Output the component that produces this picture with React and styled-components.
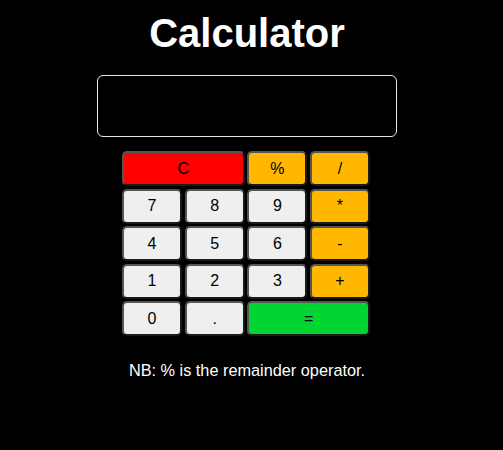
import React from "react";
import styled, { createGlobalStyle } from "styled-components";

const Global = createGlobalStyle`
  html, body { margin: 0; padding: 0; background: #000; }
  body { font-family: "Liberation Sans", Arial, sans-serif; }
`;

const Page = styled.div`
  width: 494px;
  padding-top: 10px;
  display: flex;
  flex-direction: column;
  align-items: center;
  color: #fff;
`;

const Title = styled.h1`
  margin: 0;
  font-size: 40px;
  line-height: 46px;
  font-weight: bold;
  color: #fff;
`;

const Display = styled.div`
  margin-top: 19px;
  box-sizing: border-box;
  width: 300px;
  height: 62px;
  border: 1px solid #e8e8e8;
  border-radius: 6px;
  background: #000;
`;

const Keypad = styled.div`
  margin: 14px 2px 0 0;
  display: grid;
  grid-template-columns: repeat(4, 60px);
  grid-auto-rows: 35px;
  gap: 2.5px 2.67px;
`;

const colors = {
  num: "#efefef",
  op: "#ffb700",
  clear: "#ff0000",
  equals: "#00d531",
};

const Key = styled.button`
  box-sizing: border-box;
  grid-column: span ${(p) => p.$span || 1};
  margin: 0;
  padding: 0;
  border: 2px solid;
  border-color: #555 #1a1a1a #1a1a1a #555;
  border-radius: 5px;
  background: ${(p) => colors[p.$kind]};
  color: #000;
  font-family: "Liberation Sans", Arial, sans-serif;
  font-size: 16px;
  cursor: pointer;
`;

const Note = styled.p`
  margin: 25px 0 0;
  font-size: 16.3px;
  line-height: 18px;
  color: #fff;
`;

const keys = [
  ["C", "clear", 2],
  ["%", "op"],
  ["/", "op"],
  ["7", "num"],
  ["8", "num"],
  ["9", "num"],
  ["*", "op"],
  ["4", "num"],
  ["5", "num"],
  ["6", "num"],
  ["-", "op"],
  ["1", "num"],
  ["2", "num"],
  ["3", "num"],
  ["+", "op"],
  ["0", "num"],
  [".", "num"],
  ["=", "equals", 2],
];

export default function App() {
  return (
    <>
      <Global />
      <Page>
        <Title>Calculator</Title>
        <Display />
        <Keypad>
          {keys.map(([label, kind, span]) => (
            <Key key={label} $kind={kind} $span={span}>
              {label}
            </Key>
          ))}
        </Keypad>
        <Note>NB: % is the remainder operator.</Note>
      </Page>
    </>
  );
}
